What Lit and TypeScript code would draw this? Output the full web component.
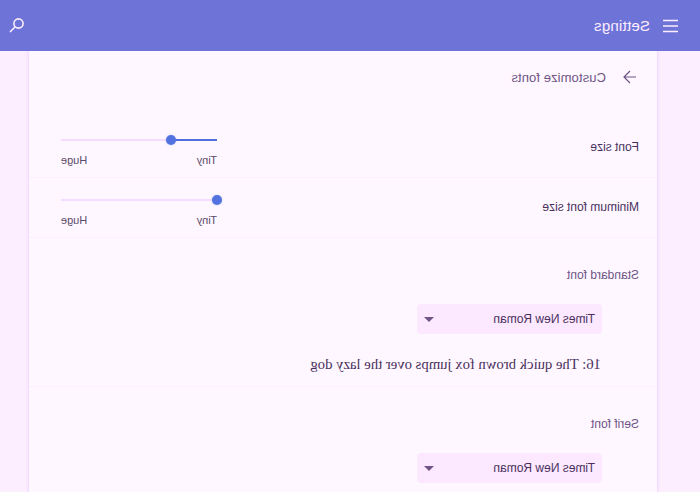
import { LitElement, html, css } from 'lit';
import { customElement, property } from 'lit/decorators.js';

// Slider with tick labels underneath
@customElement('font-slider')
export class FontSlider extends LitElement {
  @property({ type: Number }) value = 0;

  static styles = css`
    :host {
      display: block;
      width: 156px;
    }

    .track {
      position: relative;
      height: 2px;
      background: #f5dcff;
    }

    .fill {
      height: 2px;
      background: #4f6fe0;
    }

    .thumb {
      position: absolute;
      top: -4px;
      width: 10px;
      height: 10px;
      margin-left: -5px;
      border-radius: 50%;
      background: #5273df;
      box-shadow: 0 0 2px rgba(82, 115, 223, 0.35);
    }

    .ticks {
      display: flex;
      justify-content: space-between;
      margin-top: 13px;
      font-size: 11px;
      line-height: 13px;
      color: #5b4a68;
    }
  `;

  protected render() {
    return html`
      <div class="track">
        <div class="fill" style="width: ${this.value}%"></div>
        <div class="thumb" style="left: ${this.value}%"></div>
      </div>
      <div class="ticks"><span>Tiny</span><span>Huge</span></div>
    `;
  }
}

@customElement('app-root')
export class AppRoot extends LitElement {
  // The whole page is flipped horizontally, like the reference
  static styles = css`
    :host {
      display: block;
      height: 492px;
      overflow: hidden;
      transform: scaleX(-1);
      background: #fdeeff;
      font-family: "Liberation Sans", Arial, sans-serif;
      color: #49305c;
    }

    .header {
      position: relative;
      z-index: 1;
      display: flex;
      align-items: center;
      height: 51px;
      padding: 0 8px 0 22px;
      background: #6e73d7;
      color: #fdeeff;
    }

    .header .menu {
      width: 16px;
      height: 14px;
      margin-right: 12px;
    }

    .header .title {
      flex: 1;
      font-size: 15px;
      letter-spacing: 0.25px;
    }

    .header .search {
      width: 18px;
      height: 18px;
      margin-top: -2px;
    }

    .card {
      box-sizing: border-box;
      width: 630px;
      margin-left: 42px;
      height: 441px;
      background: #fef7ff;
      border-left: 1px solid #f3dcff;
      border-right: 1px solid #f3dcff;
      box-shadow: 0 0 2px 1px #f5e2ff;
    }

    .subpage {
      display: flex;
      align-items: center;
      height: 52px;
      padding-left: 21px;
      font-size: 13px;
      letter-spacing: 0.1px;
      color: #6f5585;
    }

    .subpage svg {
      width: 13px;
      height: 14px;
      margin-right: 17px;
    }

    .slider-row {
      display: flex;
      justify-content: space-between;
      height: 60px;
      box-sizing: border-box;
      padding: 0 32px 0 18px;
      border-bottom: 1px solid #fbeeff;
      font-size: 12px;
    }

    .slider-row.first {
      height: 75px;
    }

    .slider-row .label {
      line-height: 16px;
    }

    .first .label {
      margin-top: 36px;
    }

    .second .label {
      margin-top: 21px;
    }

    .first font-slider {
      margin-top: 36px;
    }

    .second font-slider {
      margin-top: 21px;
    }

    .font-row {
      box-sizing: border-box;
      height: 149px;
      padding: 29px 18px 0;
      border-bottom: 1px solid #fbeeff;
    }

    .font-row .label {
      font-size: 12px;
      line-height: 16px;
      color: #6f5585;
    }

    .select {
      display: flex;
      align-items: center;
      justify-content: space-between;
      box-sizing: border-box;
      width: 185px;
      height: 30px;
      margin: 21px 0 0 37px;
      padding: 0 7px;
      border-radius: 4px;
      background: #fce8ff;
      font-size: 12px;
      color: #49305c;
    }

    .caret {
      width: 0;
      height: 0;
      border-left: 5px solid transparent;
      border-right: 5px solid transparent;
      border-top: 5px solid #6f5585;
    }

    .sample {
      margin: 20px 0 0 38px;
      font-family: "Liberation Serif", serif;
      font-size: 14.7px;
      line-height: 20px;
    }
  `;

  private renderFontRow(label: string, sample?: string) {
    return html`
      <div class="font-row">
        <div class="label">${label}</div>
        <div class="select"><span>Times New Roman</span><span class="caret"></span></div>
        ${sample ? html`<div class="sample">${sample}</div>` : ''}
      </div>
    `;
  }

  protected render() {
    return html`
      <div class="header">
        <svg class="menu" viewBox="0 0 16 14" fill="none" stroke="currentColor" stroke-width="1.5">
          <path d="M0 1.5h15M0 7h15M0 12.5h15"></path>
        </svg>
        <div class="title">Settings</div>
        <svg class="search" viewBox="0 0 18 18" fill="none" stroke="currentColor" stroke-width="1.6">
          <circle cx="7.5" cy="7.5" r="4.6"></circle>
          <path d="M11 11l5 5"></path>
        </svg>
      </div>
      <div class="card">
        <div class="subpage">
          <svg viewBox="0 0 13 14" fill="none" stroke="currentColor" stroke-width="1.2">
            <path d="M0 7h12M6 1l6 6-6 6"></path>
          </svg>
          <span>Customize fonts</span>
        </div>
        <div class="slider-row first">
          <div class="label">Font size</div>
          <font-slider .value=${29.5}></font-slider>
        </div>
        <div class="slider-row second">
          <div class="label">Minimum font size</div>
          <font-slider .value=${0}></font-slider>
        </div>
        ${this.renderFontRow('Standard font', '16: The quick brown fox jumps over the lazy dog')}
        ${this.renderFontRow('Serif font')}
      </div>
    `;
  }
}
